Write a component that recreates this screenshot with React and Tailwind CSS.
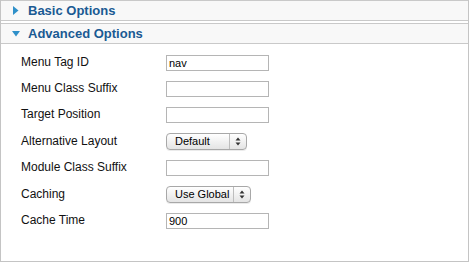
import React from "react";

function Arrows() {
  return (
    <svg width="6" height="9" viewBox="0 0 6 9" className="block">
      <path d="M3 0.5 L5.5 3.5 L0.5 3.5 Z" fill="#333" />
      <path d="M3 8.5 L5.5 5.5 L0.5 5.5 Z" fill="#333" />
    </svg>
  );
}

function TextInput({ value }) {
  return (
    <div className="w-[103px] h-[16px] border border-[#b5b5b5] bg-white flex items-center pl-[2px] text-[11px] text-black leading-none">
      {value}
    </div>
  );
}

function Select({ label, width }) {
  return (
    <div
      className={`${width} h-[17px] rounded-[4px] border border-[#a8a8a8] bg-gradient-to-b from-white to-[#e4e4e4] flex items-stretch text-[11px] text-black shadow-[0_1px_0_rgba(0,0,0,0.08)]`}
    >
      <div className="flex-1 flex items-center pl-[8px] leading-none">{label}</div>
      <div className="w-[17px] border-l border-[#bdbdbd] flex items-center justify-center">
        <Arrows />
      </div>
    </div>
  );
}

function Row({ label, children, h }) {
  return (
    <div className={`flex items-center ${h}`}>
      <div className="w-[145px] text-[12px] text-[#111] leading-none -mt-[2px]">{label}</div>
      {children}
    </div>
  );
}

function Header({ title, open }) {
  return (
    <div className="h-[21px] border-y border-[#c9c9c9] bg-[#f8f8f8] flex items-center">
      <div className="w-[27px] flex justify-center pl-[1px]">
        {open ? (
          <svg width="8" height="6" viewBox="0 0 8 6" className="ml-[2px] mt-[1px]">
            <path d="M0 0 L8 0 L4 5.5 Z" fill="#2f90c9" />
          </svg>
        ) : (
          <svg width="6" height="9" viewBox="0 0 6 9" className="ml-[1px]">
            <path d="M0 0 L5.5 4.5 L0 9 Z" fill="#2f90c9" />
          </svg>
        )}
      </div>
      <div className="text-[13px] font-bold text-[#1a5a93] leading-none">{title}</div>
    </div>
  );
}

export default function App() {
  return (
    <div className="w-[470px] h-[262px] bg-white font-['Liberation_Sans',Arial,sans-serif]">
      <div className="w-[469px] h-[262px] border-x border-b border-[#c4c4c4] flex flex-col">
        <Header title="Basic Options" />
        <div className="mt-[2px]">
          <Header title="Advanced Options" open />
        </div>
        <div className="pl-[20px] pt-[6px]">
          <Row label="Menu Tag ID" h="h-[26px]">
            <TextInput value="nav" />
          </Row>
          <Row label="Menu Class Suffix" h="h-[26px]">
            <TextInput value="" />
          </Row>
          <Row label="Target Position" h="h-[26px]">
            <TextInput value="" />
          </Row>
          <Row label="Alternative Layout" h="h-[27px]">
            <Select label="Default" width="w-[81px]" />
          </Row>
          <Row label="Module Class Suffix" h="h-[26px]">
            <TextInput value="" />
          </Row>
          <Row label="Caching" h="h-[27px]">
            <Select label="Use Global" width="w-[85px]" />
          </Row>
          <Row label="Cache Time" h="h-[26px]">
            <TextInput value="900" />
          </Row>
        </div>
      </div>
    </div>
  );
}
